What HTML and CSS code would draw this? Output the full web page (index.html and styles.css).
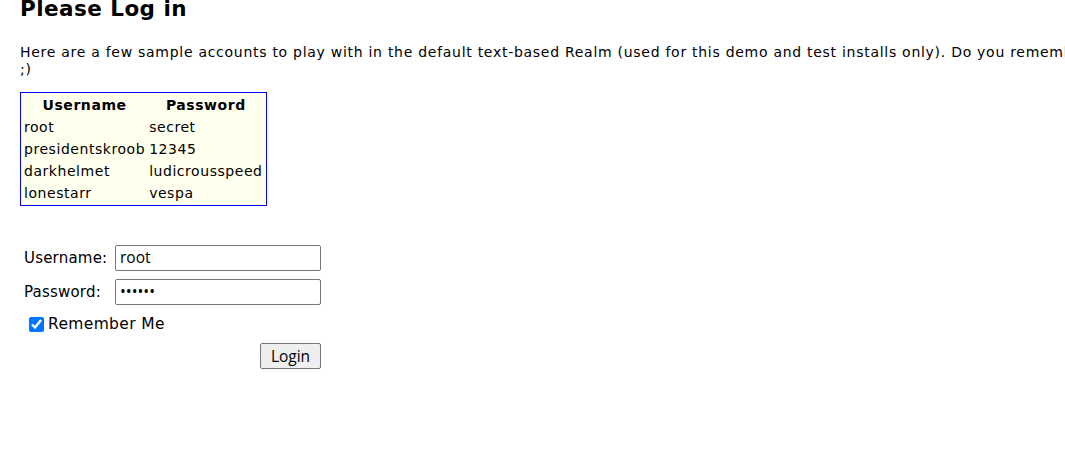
FILE: index.html
```html
<!DOCTYPE html>
<html>
<head>
<meta charset="utf-8">
<title>Please Log in</title>
<link rel="stylesheet" href="styles.css">
</head>
<body>
<h2 class="title">Please Log in</h2>
<p class="intro">Here are a few sample accounts to play with in the default text-based Realm (used for this demo and test installs only). Do you remember the movie these names came from?<br>;)</p>
<table class="accounts">
  <thead>
    <tr><th>Username</th><th>Password</th></tr>
  </thead>
  <tbody>
    <tr><td>root</td><td>secret</td></tr>
    <tr><td>presidentskroob</td><td>12345</td></tr>
    <tr><td>darkhelmet</td><td>ludicrousspeed</td></tr>
    <tr><td>lonestarr</td><td>vespa</td></tr>
  </tbody>
</table>
<form class="login" action="#" method="post">
  <label class="lbl" for="username">Username:</label>
  <input class="field" id="username" type="text" name="username" value="root">
  <label class="lbl" for="password">Password:</label>
  <input class="field" id="password" type="password" name="password" value="secret">
  <label class="remember"><input class="check" type="checkbox" name="rememberMe" checked>Remember Me</label>
  <div class="actions"><button class="btn" type="submit">Login</button></div>
</form>
</body>
</html>
```
FILE: styles.css
```css
html, body {
  margin: 0;
  padding: 0;
  background: #ffffff;
}
body {
  padding-left: 20px;
  font-family: "DejaVu Sans", Verdana, sans-serif;
  font-size: 14px;
  color: #000000;
  overflow: hidden;
  height: 463px;
}
.title {
  margin: -3px 0 0;
  font-size: 21.5px;
  line-height: 24px;
  letter-spacing: 0.45px;
  font-weight: bold;
}
.intro {
  margin: 23px 0 0;
  line-height: 17px;
  letter-spacing: 0.72px;
  white-space: nowrap;
}
.accounts {
  margin-top: 14px;
  border: 1px solid #0000ff;
  background: #ffffee;
  border-spacing: 2px;
  font-size: 14px;
  letter-spacing: 0.55px;
}
.accounts th,
.accounts td {
  padding: 1px;
  line-height: 18px;
}
.accounts th {
  text-align: center;
  font-weight: bold;
}
.accounts td {
  text-align: left;
}
.login {
  margin-top: 39px;
  width: 301px;
  display: grid;
  grid-template-columns: 91px 206px;
  grid-template-rows: 26px 26px 22px 26px;
  row-gap: 8px;
  padding-left: 4px;
  align-items: center;
}
.lbl {
  font-size: 15px;
  letter-spacing: 0.2px;
}
.field {
  box-sizing: border-box;
  height: 26px;
  width: 206px;
  margin: 0;
  border: 1px solid #767676;
  border-radius: 2px;
  padding: 0 4px 2px;
  font-family: "Open Sans", "Noto Sans", sans-serif;
  font-size: 15.5px;
  color: #000;
}
.remember {
  grid-column: 1 / 3;
  display: flex;
  align-items: center;
  gap: 4px;
  margin-left: 5px;
  font-size: 15.5px;
  letter-spacing: 0.35px;
}
.check {
  margin: 0;
  width: 15px;
  height: 15px;
  accent-color: #0075ff;
}
.actions {
  grid-column: 1 / 3;
  display: flex;
  justify-content: flex-end;
}
.btn {
  box-sizing: border-box;
  height: 26px;
  width: 61px;
  padding: 0;
  border: 1px solid #767676;
  border-radius: 2px;
  background: #efefef;
  font-family: "Open Sans", "Noto Sans", sans-serif;
  font-size: 15.5px;
  color: #000;
}
```
